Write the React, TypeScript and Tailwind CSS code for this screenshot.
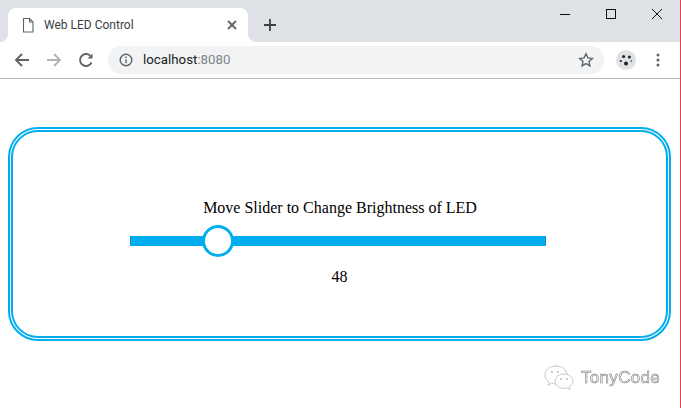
import React from "react";

function TopBar() {
  return (
    <div className="h-[42px] bg-[#dee1e6] flex items-start relative">
      <div className="w-2 h-full shrink-0" />
      <div className="relative mt-2 w-[240px] h-[34px] bg-white rounded-t-lg flex items-center shrink-0">
        <svg width="8" height="8" viewBox="0 0 8 8" fill="white" className="absolute left-[-8px] bottom-0">
          <path d="M8 0v8H0a8 8 0 0 0 8-8z" />
        </svg>
        <svg width="8" height="8" viewBox="0 0 8 8" fill="white" className="absolute right-[-8px] bottom-0">
          <path d="M0 0v8h8a8 8 0 0 1-8-8z" />
        </svg>
        <svg width="16" height="16" viewBox="0 0 16 16" fill="none" className="ml-[12px]" stroke="#5f6368" strokeWidth="1.1">
          <path d="M3.5 1.5h6l3.5 3.5v10h-9.5z" />
          <path d="M9.5 1.5v3.5h3.5" />
        </svg>
        <span className="ml-2 text-[12px] text-[#3c4043] font-['Roboto',sans-serif]">Web LED Control</span>
        <svg width="10" height="10" viewBox="0 0 10 10" className="ml-auto mr-[11px]" stroke="#5f6368" strokeWidth="1.8">
          <path d="M1 1l8 8M9 1l-8 8" />
        </svg>
      </div>
      <svg width="14" height="14" viewBox="0 0 14 14" className="ml-[15px] mt-[18px]" stroke="#3c4043" strokeWidth="1.8">
        <path d="M7 1v12M1 7h12" />
      </svg>
      <div className="ml-auto flex h-[28px] items-center">
        <div className="w-[46px] flex justify-center">
          <svg width="12" height="12" viewBox="0 0 12 12" stroke="#111" strokeWidth="1"><path d="M1 6.5h10" /></svg>
        </div>
        <div className="w-[46px] flex justify-center">
          <svg width="12" height="12" viewBox="0 0 12 12" stroke="#111" strokeWidth="1" fill="none"><rect x="1.5" y="1.5" width="9" height="9" /></svg>
        </div>
        <div className="w-[46px] flex justify-center">
          <svg width="12" height="12" viewBox="0 0 12 12" stroke="#111" strokeWidth="1"><path d="M1 1l10 10M11 1l-10 10" /></svg>
        </div>
      </div>
    </div>
  );
}

function AddressBar() {
  return (
    <div className="h-[37px] bg-white border-b border-[#b8babd] flex items-center pl-[14px]">
      <svg width="16" height="16" viewBox="0 0 16 16" fill="none" stroke="#5f6368" strokeWidth="1.9">
        <path d="M15 8H2M8 2L2 8l6 6" />
      </svg>
      <svg width="16" height="16" viewBox="0 0 16 16" fill="none" stroke="#b0b3b7" strokeWidth="1.9" className="ml-[16px]">
        <path d="M1 8h13M8 2l6 6-6 6" />
      </svg>
      <svg width="16" height="16" viewBox="0 0 16 16" fill="none" stroke="#5f6368" strokeWidth="1.9" className="ml-[16px]">
        <path d="M13.5 10.5A6 6 0 1 1 12.3 3.8" />
        <path d="M14.5 1.5v5h-5z" fill="#5f6368" stroke="none" />
      </svg>
      <div className="ml-[14px] h-7 w-[496px] bg-[#f1f3f4] rounded-full flex items-center">
        <svg width="14" height="14" viewBox="0 0 14 14" fill="none" stroke="#5f6368" strokeWidth="1.4" className="ml-[11px]">
          <circle cx="7" cy="7" r="5.8" />
          <path d="M7 6.2v4M7 3.6v1.5" />
        </svg>
        <span className="ml-[10px] text-[13.3px] font-['Roboto',sans-serif] text-[#202124]">
          localhost<span className="text-[#80868b]">:8080</span>
        </span>
        <svg width="16" height="16" viewBox="0 0 16 16" fill="none" stroke="#5f6368" strokeWidth="1.4" className="ml-auto mr-[10px]">
          <path d="M8 1.8l1.9 4.1 4.4.5-3.3 3 .9 4.4L8 11.6l-3.9 2.2.9-4.4-3.3-3 4.4-.5z" />
        </svg>
      </div>
      <div className="ml-[12px] w-5 h-5 rounded-full bg-[#dee1e6] flex items-center justify-center">
        {/* soccer ball avatar */}
        <svg width="14" height="14" viewBox="0 0 14 14" fill="#222">
          <circle cx="7" cy="10.5" r="2" />
          <circle cx="4.6" cy="3.6" r="1.5" />
          <circle cx="10.4" cy="4" r="1.5" />
          <circle cx="1.8" cy="8" r="1.1" />
          <circle cx="12.4" cy="8" r="0.8" />
        </svg>
      </div>
      <svg width="4" height="14" viewBox="0 0 4 14" fill="#5f6368" className="ml-[20px]">
        <circle cx="2" cy="2" r="1.5" />
        <circle cx="2" cy="7" r="1.5" />
        <circle cx="2" cy="12" r="1.5" />
      </svg>
    </div>
  );
}

function Watermark() {
  return (
    <div className="absolute right-[20px] bottom-[16px] flex items-center gap-[6px] opacity-[0.99] [will-change:opacity]">
      <svg width="32" height="28" viewBox="0 0 32 28" fill="white" stroke="#8f8f8f" strokeWidth="0.6" strokeDasharray="2 0.6">
        <path d="M13 2C6.5 2 2 6 2 11c0 3 1.6 5.2 4 7l-1 3 3.5-1.8c1.2.4 2.5.6 4.5.6 6 0 11-3.8 11-8.8S19.5 2 13 2z" />
        <path d="M21 10c-5 0-9 3.2-9 7.2s4 7.2 9 7.2c1.2 0 2-.1 3-.5l3 1.6-.8-2.6c2.4-1.4 3.8-3.4 3.8-5.7 0-4-4-7.2-9-7.2z" />
        <circle cx="9" cy="8" r="0.8" fill="#888" stroke="none" />
        <circle cx="15" cy="8" r="0.8" fill="#888" stroke="none" />
        <circle cx="18" cy="15" r="0.8" fill="#888" stroke="none" />
        <circle cx="24" cy="15" r="0.8" fill="#888" stroke="none" />
      </svg>
      <span className="text-[17px] antialiased text-[#f4f4f4] [-webkit-text-stroke:0.5px_#6e6e6e] font-['Liberation_Sans',sans-serif] tracking-[0.3px]">TonyCode</span>
    </div>
  );
}

export default function App() {
  return (
    <div className="relative w-[681px] h-[408px] bg-white overflow-hidden border-r border-[#e6404f] font-['Liberation_Serif',serif]">
      <TopBar />
      <AddressBar />
      <div className="mt-[48px] ml-2 w-[663px] h-[214px] border-[5px] border-double border-[#00aeef] rounded-[30px] flex flex-col items-center text-[16px] text-black">
        <p className="mt-[67px] ml-[1px] leading-[18px]">Move Slider to Change Brightness of LED</p>
        <div className="mt-[19px] ml-[-3px] w-[416px] h-[10px] bg-[#00aeef] border-x border-[#0a8fd6] rounded-[1px] relative">
          <div className="absolute left-[71px] top-[-11px] w-8 h-8 rounded-full bg-white border-[3px] border-[#00aeef]" />
        </div>
        <p className="mt-[22px] leading-[18px]">48</p>
      </div>
      <Watermark />
    </div>
  );
}
